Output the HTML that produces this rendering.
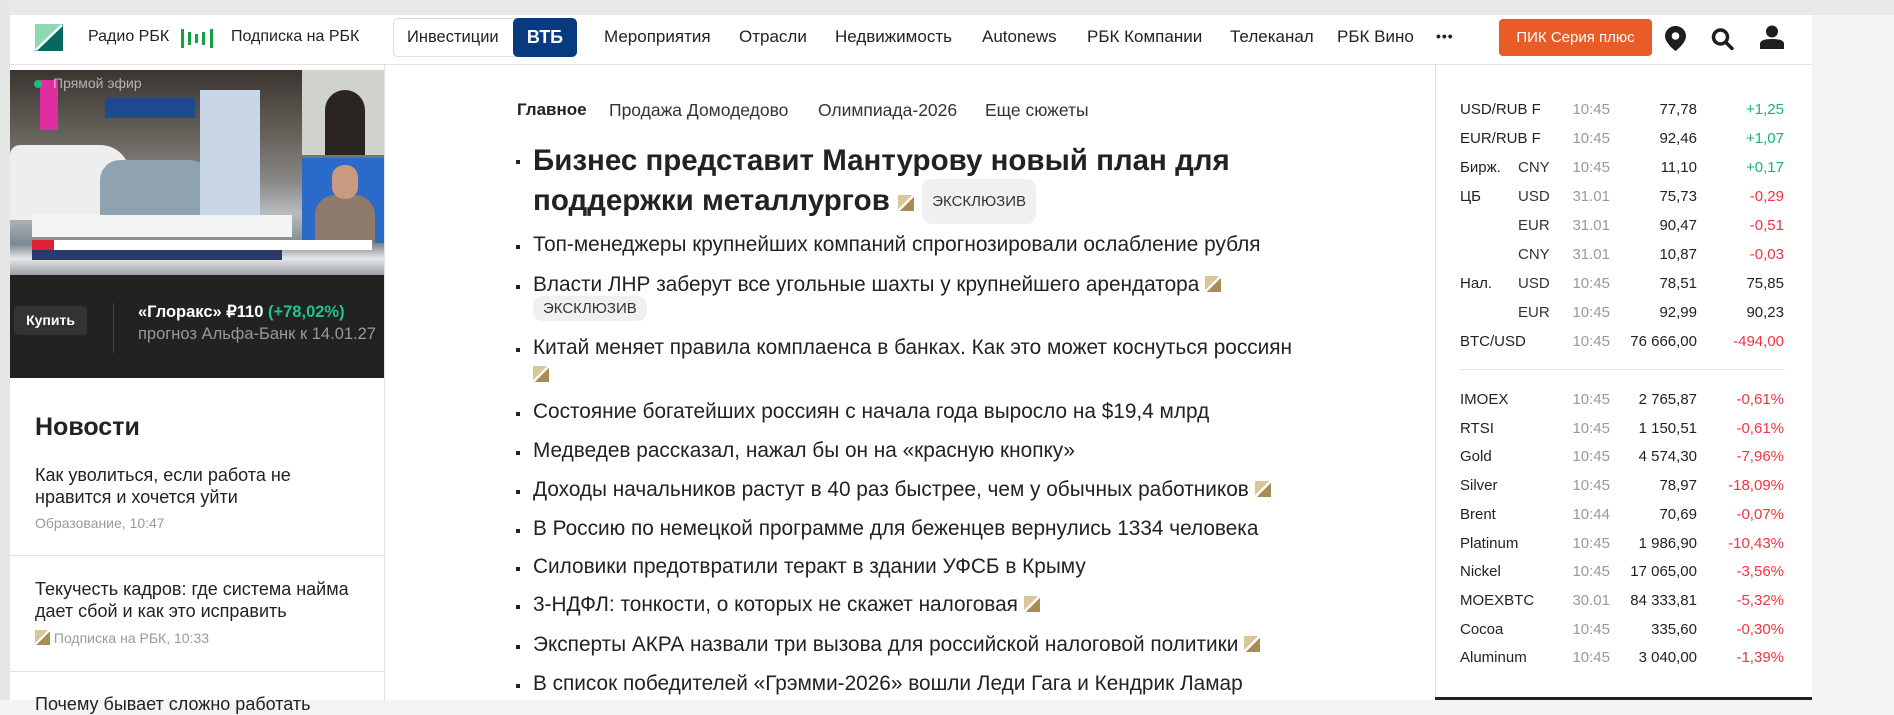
<!DOCTYPE html>
<html><head><meta charset="utf-8">
<style>
*{margin:0;padding:0;box-sizing:border-box}
body{width:1894px;height:700px;overflow:hidden;background:#f4f4f4;font-family:"Liberation Sans",sans-serif;color:#222;position:relative}
.abs{position:absolute;white-space:nowrap}
#leftgray{position:absolute;left:0;top:0;width:10px;height:700px;background:#e6e6e6}
#topgray{position:absolute;left:0;top:0;width:1894px;height:15px;background:#e8e8e8}
#wrap{position:absolute;left:10px;top:15px;width:1802px;height:685px;background:#fff}
#hdr{position:absolute;left:10px;top:15px;width:1802px;height:50px;border-bottom:1px solid #e2e2e2}
.nav{font-size:17px;color:#222;top:27px}
.mk{font-size:15px;color:#222}
.t{color:#999}
.g{color:#16b27a}
.r{color:#f2333f}
.li{font-size:20.8px;color:#222}
.dot{position:absolute;width:4px;height:4px;background:#222}
.gold{display:inline-block;width:16px;height:16px;background:linear-gradient(135deg,#d9c79a 0 45%,#fff 45% 55%,#a98c55 55%);vertical-align:-1px}
.badge{display:inline-block;background:#f0f0f0;border-radius:9px;font-size:15px;padding:4px 10px;color:#333;font-weight:normal}
</style></head><body>
<div id="topgray"></div><div id="leftgray"></div>
<div id="wrap"></div>
<div id="hdr"></div>
<svg class="abs" style="left:35px;top:24px" width="28" height="27"><polygon points="0,0 28,0 0,27" fill="#8ed8b4"/><polygon points="28,0 28,27 0,27" fill="#046960"/><line x1="27" y1="1" x2="1" y2="26" stroke="#fff" stroke-width="2.5"/></svg>
<div class="abs" style="left:88px;top:28px;font-size:16px">Радио РБК</div>
<svg class="abs" style="left:181px;top:29px" width="34" height="19"><g fill="#12a146"><rect x="0" y="0" width="3" height="19"/><rect x="7" y="3" width="3" height="13"/><rect x="14" y="5" width="3" height="9"/><rect x="21" y="3" width="3" height="13"/><rect x="29" y="0" width="3" height="19"/></g></svg>
<div class="abs" style="left:231px;top:28px;font-size:16px">Подписка на РБК</div>
<div class="abs" style="left:393px;top:18px;width:184px;height:39px;border:1px solid #ddd;border-radius:5px"></div>
<div class="abs" style="left:407px;top:28px;font-size:16.5px">Инвестиции</div>
<div class="abs" style="left:513px;top:18px;width:64px;height:39px;background:#083a80;border-radius:5px;color:#fff;font-weight:bold;font-size:18px;text-align:center;line-height:39px">ВТБ</div>
<div class="abs nav" style="left:604px">Мероприятия</div>
<div class="abs nav" style="left:739px">Отрасли</div>
<div class="abs nav" style="left:835px">Недвижимость</div>
<div class="abs nav" style="left:982px">Autonews</div>
<div class="abs nav" style="left:1087px">РБК Компании</div>
<div class="abs nav" style="left:1230px">Телеканал</div>
<div class="abs nav" style="left:1337px">РБК Вино</div>
<div class="abs" style="left:1436px;top:28px;font-size:14px;font-weight:bold;letter-spacing:1px">•••</div>
<div class="abs" style="left:1499px;top:19px;width:153px;height:37px;background:#e85c28;border-radius:4px;color:#fff;font-size:15px;text-align:center;line-height:37px">ПИК Серия плюс</div>
<svg class="abs" style="left:1665px;top:26px" width="21" height="25" viewBox="0 0 21 25"><path d="M10.5 0C4.7 0 0 4.5 0 10.2 0 17 10.5 25 10.5 25S21 17 21 10.2C21 4.5 16.3 0 10.5 0z" fill="#1e1e1e"/><circle cx="10.5" cy="10" r="3.8" fill="#fff"/></svg>
<svg class="abs" style="left:1711px;top:28px" width="25" height="22" viewBox="0 0 25 22"><circle cx="9.5" cy="9" r="7" fill="none" stroke="#1e1e1e" stroke-width="3.5"/><line x1="14.5" y1="14" x2="21" y2="20.5" stroke="#1e1e1e" stroke-width="3.5" stroke-linecap="round"/></svg>
<svg class="abs" style="left:1760px;top:25px" width="24" height="24" viewBox="0 0 24 24"><circle cx="12" cy="6.5" r="6" fill="#1e1e1e"/><path d="M0 24V19C0 15.5 4 14 12 14S24 15.5 24 19V24Z" fill="#1e1e1e"/></svg>

<div class="abs" style="left:384px;top:65px;width:1px;height:635px;background:#e2e2e2"></div>
<div class="abs" style="left:10px;top:70px;width:374px;height:205px;background:linear-gradient(180deg,#3a3530 0%,#6b6660 35%,#8a8a88 55%,#b8bcc0 70%,#7d8890 85%,#e8e8e8 92%,#9aa0a8 100%);overflow:hidden">
 <div style="position:absolute;left:0;top:75px;width:120px;height:75px;background:#eee;border-radius:10px 30px 0 0"></div>
 <div style="position:absolute;left:90px;top:90px;width:110px;height:60px;background:#8fa2b0;border-radius:20px 20px 0 0"></div>
 <div style="position:absolute;left:30px;top:10px;width:18px;height:50px;background:#e02ea0"></div>
 <div style="position:absolute;left:95px;top:28px;width:90px;height:20px;background:#1d4a8c"></div>
 <div style="position:absolute;left:190px;top:20px;width:60px;height:130px;background:#c8d6e8"></div>
 <div style="position:absolute;left:292px;top:0;width:82px;height:85px;background:#cfd3cc"></div>
 <div style="position:absolute;left:315px;top:20px;width:40px;height:65px;background:#2b2522;border-radius:20px 20px 0 0"></div>
 <div style="position:absolute;left:292px;top:88px;width:82px;height:85px;background:#2a6ac9"></div>
 <div style="position:absolute;left:305px;top:125px;width:60px;height:48px;background:#8d7a6a;border-radius:20px 20px 0 0"></div>
 <div style="position:absolute;left:322px;top:95px;width:26px;height:34px;background:#c99a80;border-radius:12px"></div>
 <div style="position:absolute;left:22px;top:145px;width:260px;height:22px;background:#f4f4f4"></div>
 <div style="position:absolute;left:22px;top:170px;width:340px;height:10px;background:#fff"></div>
 <div style="position:absolute;left:22px;top:170px;width:22px;height:10px;background:#d23"></div>
 <div style="position:absolute;left:22px;top:180px;width:250px;height:10px;background:#2a3a6a"></div>
 <div style="position:absolute;left:24px;top:10px;width:8px;height:8px;border-radius:50%;background:#19c07a"></div>
 <div style="position:absolute;left:43px;top:5px;font-size:14px;color:rgba(255,255,255,.6)">Прямой эфир</div>
</div>
<div class="abs" style="left:10px;top:275px;width:374px;height:103px;background:#222"></div>
<div class="abs" style="left:14px;top:306px;width:73px;height:29px;background:#333;border-radius:4px;color:#fff;font-size:14px;font-weight:bold;text-align:center;line-height:29px">Купить</div>
<div class="abs" style="left:113px;top:303px;width:1px;height:50px;background:#444"></div>
<div class="abs" style="left:138px;top:302px;font-size:16.5px;color:#fff;font-weight:bold">«Глоракс» ₽110 <span style="color:#1fc58a">(+78,02%)</span></div>
<div class="abs" style="left:138px;top:325px;font-size:16.5px;color:#999;width:246px;overflow:hidden">прогноз Альфа-Банк к 14.01.27</div>
<div class="abs" style="left:35px;top:413px;font-size:25px;font-weight:bold">Новости</div>
<div class="abs" style="left:35px;top:464px;font-size:18px;line-height:22px">Как уволиться, если работа не<br>нравится и хочется уйти</div>
<div class="abs" style="left:35px;top:515px;font-size:14px;color:#999">Образование, 10:47</div>
<div class="abs" style="left:10px;top:555px;width:374px;height:1px;background:#e2e2e2"></div>
<div class="abs" style="left:35px;top:578px;font-size:18px;line-height:22px">Текучесть кадров: где система найма<br>дает сбой и как это исправить</div>
<div class="abs" style="left:35px;top:630px;font-size:14px;color:#999"><span class="gold" style="width:15px;height:15px;vertical-align:-2px"></span> Подписка на РБК, 10:33</div>
<div class="abs" style="left:10px;top:671px;width:374px;height:1px;background:#e2e2e2"></div>
<div class="abs" style="left:35px;top:694px;font-size:18px">Почему бывает сложно работать</div>

<div class="abs" style="left:517px;top:100px;font-size:17px;font-weight:bold">Главное</div>
<div class="abs" style="left:609px;top:100px;font-size:17.5px;color:#333">Продажа Домодедово</div>
<div class="abs" style="left:818px;top:100px;font-size:17.5px;color:#333">Олимпиада-2026</div>
<div class="abs" style="left:985px;top:100px;font-size:17.5px;color:#333">Еще сюжеты</div>
<div class="dot" style="left:516px;top:160px"></div>
<div class="abs" style="left:533px;top:142px;font-size:29.5px;font-weight:bold;line-height:37px">Бизнес представит Мантурову новый план для<br>поддержки металлургов <span class="gold"></span> <span class="badge" style="vertical-align:4px">ЭКСКЛЮЗИВ</span></div>
<div class="dot" style="left:516px;top:245px"></div><div class="abs li" style="left:533px;top:233px">Топ-менеджеры крупнейших компаний спрогнозировали ослабление рубля</div>
<div class="dot" style="left:516px;top:285px"></div><div class="abs li" style="left:533px;top:273px">Власти ЛНР заберут все угольные шахты у крупнейшего арендатора <span class="gold"></span></div>
<div class="abs" style="left:533px;top:296px"><span class="badge">ЭКСКЛЮЗИВ</span></div>
<div class="dot" style="left:516px;top:348px"></div><div class="abs li" style="left:533px;top:336px">Китай меняет правила комплаенса в банках. Как это может коснуться россиян</div>
<div class="abs" style="left:533px;top:366px"><span class="gold"></span></div>
<div class="dot" style="left:516px;top:412px"></div><div class="abs li" style="left:533px;top:400px">Состояние богатейших россиян с начала года выросло на $19,4 млрд</div>
<div class="dot" style="left:516px;top:451px"></div><div class="abs li" style="left:533px;top:439px">Медведев рассказал, нажал бы он на «красную кнопку»</div>
<div class="dot" style="left:516px;top:490px"></div><div class="abs li" style="left:533px;top:478px">Доходы начальников растут в 40 раз быстрее, чем у обычных работников <span class="gold"></span></div>
<div class="dot" style="left:516px;top:529px"></div><div class="abs li" style="left:533px;top:517px">В Россию по немецкой программе для беженцев вернулись 1334 человека</div>
<div class="dot" style="left:516px;top:567px"></div><div class="abs li" style="left:533px;top:555px">Силовики предотвратили теракт в здании УФСБ в Крыму</div>
<div class="dot" style="left:516px;top:605px"></div><div class="abs li" style="left:533px;top:593px">3-НДФЛ: тонкости, о которых не скажет налоговая <span class="gold"></span></div>
<div class="dot" style="left:516px;top:645px"></div><div class="abs li" style="left:533px;top:633px">Эксперты АКРА назвали три вызова для российской налоговой политики <span class="gold"></span></div>
<div class="dot" style="left:516px;top:684px"></div><div class="abs li" style="left:533px;top:672px">В список победителей «Грэмми-2026» вошли Леди Гага и Кендрик Ламар</div>

<div class="abs" style="left:1435px;top:65px;width:1px;height:635px;background:#e2e2e2"></div>
<div class="abs" style="left:1460px;top:369px;width:325px;height:1px;background:#e2e2e2"></div>
<div class="abs" style="left:1435px;top:697px;width:377px;height:3px;background:#222"></div>
<div id="mk"></div>
<script>
var rows=[["USD/RUB F","","10:45","77,78","+1,25","g"],["EUR/RUB F","","10:45","92,46","+1,07","g"],["Бирж.","CNY","10:45","11,10","+0,17","g"],["ЦБ","USD","31.01","75,73","-0,29","r"],["","EUR","31.01","90,47","-0,51","r"],["","CNY","31.01","10,87","-0,03","r"],["Нал.","USD","10:45","78,51","75,85",""],["","EUR","10:45","92,99","90,23",""],["BTC/USD","","10:45","76 666,00","-494,00","r"]];
var rows2=[["IMOEX","10:45","2 765,87","-0,61%"],["RTSI","10:45","1 150,51","-0,61%"],["Gold","10:45","4 574,30","-7,96%"],["Silver","10:45","78,97","-18,09%"],["Brent","10:44","70,69","-0,07%"],["Platinum","10:45","1 986,90","-10,43%"],["Nickel","10:45","17 065,00","-3,56%"],["MOEXBTC","30.01","84 333,81","-5,32%"],["Cocoa","10:45","335,60","-0,30%"],["Aluminum","10:45","3 040,00","-1,39%"]];
var h="";
rows.forEach(function(r,i){var y=101+i*29;
h+='<div class="abs mk" style="left:1460px;top:'+y+'px">'+r[0]+'</div><div class="abs mk" style="left:1518px;top:'+y+'px;color:#333">'+r[1]+'</div><div class="abs mk t" style="left:1530px;width:80px;text-align:right;top:'+y+'px">'+r[2]+'</div><div class="abs mk" style="left:1597px;width:100px;text-align:right;top:'+y+'px">'+r[3]+'</div><div class="abs mk '+r[5]+'" style="left:1684px;width:100px;text-align:right;top:'+y+'px">'+r[4]+'</div>';});
rows2.forEach(function(r,i){var y=391+i*28.7;
h+='<div class="abs mk" style="left:1460px;top:'+y+'px">'+r[0]+'</div><div class="abs mk t" style="left:1530px;width:80px;text-align:right;top:'+y+'px">'+r[1]+'</div><div class="abs mk" style="left:1597px;width:100px;text-align:right;top:'+y+'px">'+r[2]+'</div><div class="abs mk r" style="left:1684px;width:100px;text-align:right;top:'+y+'px">'+r[3]+'</div>';});
document.getElementById("mk").innerHTML=h;
</script>
</body></html>
